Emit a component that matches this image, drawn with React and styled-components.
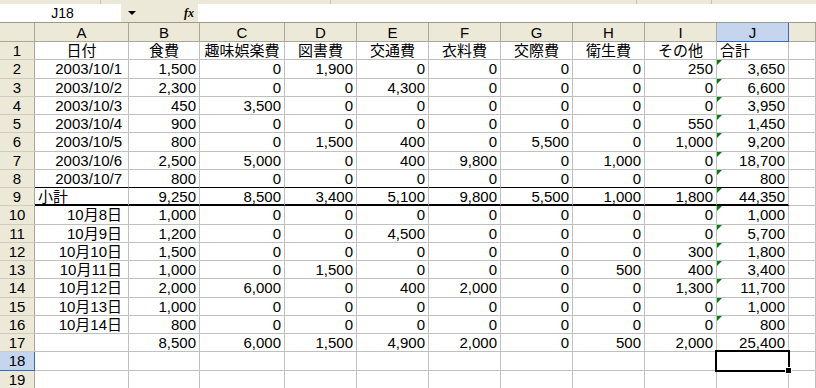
import React from 'react';
import styled, { createGlobalStyle, css } from 'styled-components';

const GlobalStyle = createGlobalStyle`
  html, body {
    margin: 0;
    padding: 0;
    background: #ffffff;
  }
  body {
    font-family: "Liberation Sans", "Noto Sans CJK JP", sans-serif;
    overflow: hidden;
  }
`;

const Sheet = styled.div`
  width: 816px;
  height: 388px;
  overflow: hidden;
  background: #ffffff;
`;

const ToolbarEdge = styled.div`
  height: 4px;
  display: flex;
  background: #ece9d8;
`;
const ToolSeg = styled.div`
  width: ${(p) => p.$w}px;
  border-right: 1px solid #c7c3b2;
  box-sizing: border-box;
`;

const FormulaBar = styled.div`
  height: 18px;
  display: flex;
  align-items: stretch;
  background: #ece9d8;
`;
const NameBox = styled.div`
  flex: 0 0 121px;
  background: #ffffff;
  font-size: 14px;
  line-height: 18px;
  text-align: center;
  text-indent: 4px;
`;
const DropArrow = styled.div`
  flex: 0 0 22px;
  display: flex;
  align-items: center;
  justify-content: center;
  &::after {
    content: '';
    border-left: 4px solid transparent;
    border-right: 4px solid transparent;
    border-top: 4px solid #000;
  }
`;
const FxLabel = styled.div`
  flex: 0 0 55px;
  display: flex;
  align-items: center;
  justify-content: flex-end;
  padding-right: 4px;
  box-sizing: border-box;
  font-family: "Liberation Serif", serif;
  font-style: italic;
  font-weight: bold;
  font-size: 12px;
`;
const FormulaInput = styled.div`
  flex: 1;
  background: #ffffff;
`;

const Grid = styled.div`
  display: grid;
  grid-template-columns: 35px 94px 71px 85px 72px 72px 72px 72px 72px 72px 72px 1fr;
  grid-template-rows: 19px;
  grid-auto-rows: 18.25px;
  border-top: 1px solid #9c9a8c;
  font-size: 15px;
  line-height: 1;
`;

const HeadCell = styled.div`
  background: ${(p) => (p.$active ? '#c5d5ee' : '#ece9d8')};
  border-right: 1px solid ${(p) => (p.$active ? '#316ac5' : '#aca899')};
  border-bottom: 1px solid ${(p) => (p.$active ? '#316ac5' : '#aca899')};
  box-sizing: border-box;
  display: flex;
  align-items: center;
  justify-content: center;
  color: #000;
`;

const RowHead = styled.div`
  background: ${(p) => (p.$active ? '#c5d5ee' : '#ece9d8')};
  border-right: 1px solid ${(p) => (p.$active ? '#316ac5' : '#aca899')};
  border-bottom: 1px solid ${(p) => (p.$active ? '#316ac5' : '#cfccbd')};
  box-sizing: border-box;
  display: flex;
  align-items: center;
  justify-content: center;
  overflow: hidden;
`;

const Cell = styled.div`
  position: relative;
  box-sizing: border-box;
  border-right: 1px solid #c0c0c0;
  border-bottom: 1px solid #c0c0c0;
  display: flex;
  align-items: center;
  justify-content: ${(p) =>
    p.$align === 'left' ? 'flex-start' : p.$align === 'center' ? 'center' : 'flex-end'};
  padding: 0 ${(p) => (p.$wide ? 6 : 3)}px 0 3px;
  white-space: nowrap;
  ${(p) =>
    p.$rule === 'thin' &&
    css`
      border-bottom: 1px solid #000;
    `}
  ${(p) =>
    p.$rule === 'thick' &&
    css`
      border-bottom: 2px solid #000;
    `}
  ${(p) =>
    p.$flag &&
    css`
      &::before {
        content: '';
        position: absolute;
        top: 0;
        left: 0;
        border-top: 5px solid #008000;
        border-right: 5px solid transparent;
      }
    `}
  ${(p) =>
    p.$selected &&
    css`
      &::after {
        content: '';
        position: absolute;
        top: -2px;
        left: -2px;
        right: -2px;
        bottom: -2px;
        border: 2px solid #000;
        z-index: 2;
      }
      &::before {
        content: '';
        position: absolute;
        right: -4px;
        bottom: -4px;
        width: 5px;
        height: 5px;
        background: #000;
        border: 1px solid #fff;
        z-index: 3;
      }
    `}
`;

const letters = ['A', 'B', 'C', 'D', 'E', 'F', 'G', 'H', 'I', 'J', ''];

const heading = ['日付', '食費', '趣味娯楽費', '図書費', '交通費', '衣料費', '交際費', '衛生費', 'その他', '合計', ''];

const data = [
  ['2003/10/1', '1,500', '0', '1,900', '0', '0', '0', '0', '250', '3,650'],
  ['2003/10/2', '2,300', '0', '0', '4,300', '0', '0', '0', '0', '6,600'],
  ['2003/10/3', '450', '3,500', '0', '0', '0', '0', '0', '0', '3,950'],
  ['2003/10/4', '900', '0', '0', '0', '0', '0', '0', '550', '1,450'],
  ['2003/10/5', '800', '0', '1,500', '400', '0', '5,500', '0', '1,000', '9,200'],
  ['2003/10/6', '2,500', '5,000', '0', '400', '9,800', '0', '1,000', '0', '18,700'],
  ['2003/10/7', '800', '0', '0', '0', '0', '0', '0', '0', '800'],
  ['小計', '9,250', '8,500', '3,400', '5,100', '9,800', '5,500', '1,000', '1,800', '44,350'],
  ['10月8日', '1,000', '0', '0', '0', '0', '0', '0', '0', '1,000'],
  ['10月9日', '1,200', '0', '0', '4,500', '0', '0', '0', '0', '5,700'],
  ['10月10日', '1,500', '0', '0', '0', '0', '0', '0', '300', '1,800'],
  ['10月11日', '1,000', '0', '1,500', '0', '0', '0', '500', '400', '3,400'],
  ['10月12日', '2,000', '6,000', '0', '400', '2,000', '0', '0', '1,300', '11,700'],
  ['10月13日', '1,000', '0', '0', '0', '0', '0', '0', '0', '1,000'],
  ['10月14日', '800', '0', '0', '0', '0', '0', '0', '0', '800'],
  ['', '8,500', '6,000', '1,500', '4,900', '2,000', '0', '500', '2,000', '25,400'],
  ['', '', '', '', '', '', '', '', '', ''],
  ['', '', '', '', '', '', '', '', '', ''],
];

const App = () => {
  return (
    <Sheet>
      <GlobalStyle />
      <ToolbarEdge>
        <ToolSeg $w={101} />
        <ToolSeg $w={230} />
        <ToolSeg $w={306} />
        <ToolSeg $w={75} />
      </ToolbarEdge>
      <FormulaBar>
        <NameBox>J18</NameBox>
        <DropArrow />
        <FxLabel>fx</FxLabel>
        <FormulaInput />
      </FormulaBar>
      <Grid>
        <HeadCell />
        {letters.map((l, i) => (
          <HeadCell key={'h' + i} $active={l === 'J'}>
            {l}
          </HeadCell>
        ))}

        <RowHead>1</RowHead>
        {heading.map((h, i) => (
          <Cell key={'t' + i} $align={i === 9 ? 'left' : 'center'}>
            {h}
          </Cell>
        ))}

        {data.map((row, r) => {
          const num = r + 2;
          const cells = [];
          row.forEach((v, c) => {
            let rule;
            if (num === 8) rule = 'thin';
            if (num === 9) rule = 'thick';
            cells.push(
              <Cell
                key={num + '-' + c}
                $align={num === 9 && c === 0 ? 'left' : 'right'}
                $wide={c === 0}
                $rule={rule}
                $flag={c === 9 && num <= 16}
                $selected={c === 9 && num === 18}
              >
                {v}
              </Cell>
            );
          });
          cells.push(<Cell key={num + '-k'} />);
          return (
            <React.Fragment key={'r' + num}>
              <RowHead $active={num === 18}>{num}</RowHead>
              {cells}
            </React.Fragment>
          );
        })}
      </Grid>
    </Sheet>
  );
};

export default App;
